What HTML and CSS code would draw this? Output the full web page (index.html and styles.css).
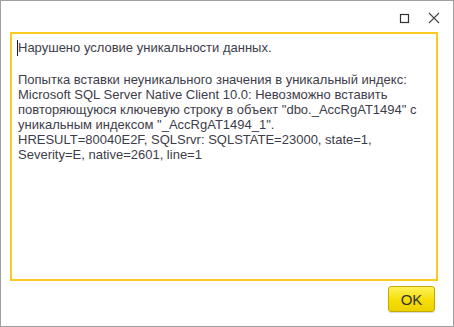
FILE: index.html
```html
<!DOCTYPE html>
<html lang="ru">

<head>
    <meta charset="UTF-8">
    <title>Ошибка</title>
    <link rel="stylesheet" href="styles.css">
</head>

<body>
    <div class="window">
        <div class="title-bar">
            <span class="title-btn">
                <svg width="11" height="11" viewBox="0 0 11 11">
                    <rect x="1.5" y="1.5" width="8" height="8" fill="none" stroke="#333" stroke-width="1.2"/>
                </svg>
            </span>
            <span class="title-btn">
                <svg width="12" height="12" viewBox="0 0 12 12">
                    <path d="M1 1 L11 11 M11 1 L1 11" stroke="#444" stroke-width="1.1"/>
                </svg>
            </span>
        </div>
        <div class="message-box">
            <div class="message-text message-title"><span class="caret"></span>Нарушено условие уникальности данных.</div>
            <div class="message-text">Попытка вставки неуникального значения в уникальный индекс:
Microsoft SQL Server Native Client 10.0: Невозможно вставить
повторяющуюся ключевую строку в объект "dbo._AccRgAT1494" с
уникальным индексом "_AccRgAT1494_1".
HRESULT=80040E2F, SQLSrvr: SQLSTATE=23000, state=1,
Severity=E, native=2601, line=1</div>
        </div>
        <div class="footer">
            <button class="ok-btn">OK</button>
        </div>
    </div>
</body>

</html>
```

FILE: styles.css
```css
body {
    margin: 0;
    font-family: "Liberation Sans", Arial, sans-serif;
    background: #fff;
}

.window {
    box-sizing: border-box;
    width: 454px;
    height: 327px;
    border: 1px solid #a0a0a0;
    background: #fff;
    display: flex;
    flex-direction: column;
}

.title-bar {
    height: 31px;
    display: flex;
    justify-content: flex-end;
    align-items: flex-start;
    padding-right: 9px;
}

.title-btn {
    display: flex;
    align-items: center;
    justify-content: center;
    width: 20px;
    height: 12px;
    margin-top: 11px;
    margin-left: 10px;
}

.message-box {
    box-sizing: border-box;
    height: 249px;
    margin: 0 15px 0 9px;
    border: 2px solid #fbca1f;
    padding: 6px 6px;
}

.message-text {
    position: relative;
    white-space: pre-wrap;
    font-size: 13px;
    line-height: 15px;
    color: #3d3d4a;
}

.message-title {
    margin-bottom: 17px;
}

.caret {
    position: absolute;
    left: -1px;
    top: 0;
    width: 1px;
    height: 16px;
    background: #1a1a40;
}

.footer {
    display: flex;
    justify-content: flex-end;
    padding: 5px 18px 0 0;
}

.ok-btn {
    width: 47px;
    height: 26px;
    border: 1px solid #c2aa00;
    border-radius: 3px;
    background: linear-gradient(#fff25a, #f5dc00 60%, #ecd200);
    font-family: "Liberation Sans", Arial, sans-serif;
    font-size: 15px;
    color: #333;
    padding: 0;
    box-shadow: 0 1px 1px rgba(0, 0, 0, 0.15);
}
```
